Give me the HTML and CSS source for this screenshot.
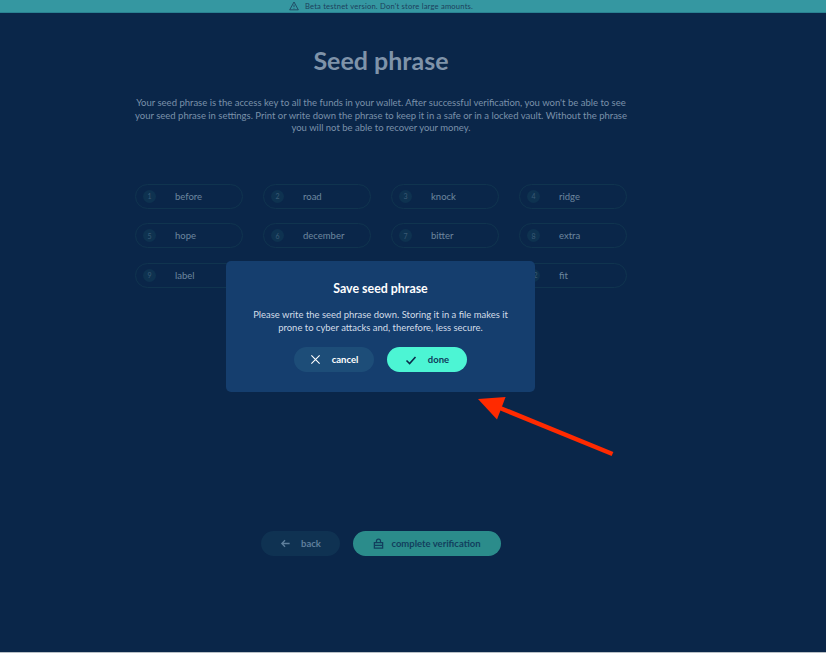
FILE: index.html
```html
<!DOCTYPE html>
<html lang="en">
<head>
  <meta charset="UTF-8">
  <meta name="viewport" content="width=device-width, initial-scale=1.0">
  <title>Seed phrase</title>
  <link rel="stylesheet" href="styles.css">
</head>
<body>
  <div class="beta-bar">
    <div class="beta-inner">
      <svg class="beta-icon" viewBox="0 0 12 12" width="10" height="10"><path d="M6 1.2 L11.2 10.6 H0.8 Z M6 4.4 V7.4 M6 8.5 V9.2" fill="none" stroke="#1d3f5c" stroke-width="1"/></svg>
      <span>Beta testnet version. Don't store large amounts.</span>
    </div>
  </div>

  <div class="page">
    <h1>Seed phrase</h1>
    <p class="intro">Your seed phrase is the access key to all the funds in your wallet. After successful verification, you won't be able to see your seed phrase in settings. Print or write down the phrase to keep it in a safe or in a locked vault. Without the phrase you will not be able to recover your money.</p>

    <div class="words">
      <div class="word"><span class="num">1</span><span>before</span></div>
      <div class="word"><span class="num">2</span><span>road</span></div>
      <div class="word"><span class="num">3</span><span>knock</span></div>
      <div class="word"><span class="num">4</span><span>ridge</span></div>
      <div class="word"><span class="num">5</span><span>hope</span></div>
      <div class="word"><span class="num">6</span><span>december</span></div>
      <div class="word"><span class="num">7</span><span>bitter</span></div>
      <div class="word"><span class="num">8</span><span>extra</span></div>
      <div class="word"><span class="num">9</span><span>label</span></div>
      <div class="word"><span class="num">10</span><span>wide</span></div>
      <div class="word"><span class="num">11</span><span>panel</span></div>
      <div class="word"><span class="num">12</span><span>fit</span></div>
    </div>

    <div class="actions">
      <button class="btn btn-back">
        <svg viewBox="0 0 12 12" width="11" height="11"><path d="M10.5 6 H2 M5.5 2.5 L2 6 L5.5 9.5" fill="none" stroke="#5f7f9c" stroke-width="1.4"/></svg>
        back
      </button>
      <button class="btn btn-complete">
        <svg viewBox="0 0 12 12" width="11" height="11"><path d="M3.8 5 V3.4 A2.2 2.2 0 0 1 8.2 3.4 V5 M1.5 5 H10.5 V11 H1.5 Z M1.5 8 H10.5" fill="none" stroke="#123f5e" stroke-width="1.4"/></svg>
        complete verification
      </button>
    </div>
  </div>

  <!-- Save dialog -->
  <div class="modal">
    <h2>Save seed phrase</h2>
    <p>Please write the seed phrase down. Storing it in a file makes it prone to cyber attacks and, therefore, less secure.</p>
    <div class="modal-actions">
      <button class="btn btn-cancel">
        <svg viewBox="0 0 12 12" width="11" height="11"><path d="M1.5 1.5 L10.5 10.5 M10.5 1.5 L1.5 10.5" fill="none" stroke="#ffffff" stroke-width="1.2"/></svg>
        cancel
      </button>
      <button class="btn btn-done">
        <svg viewBox="0 0 12 12" width="12" height="12"><path d="M1.5 6.5 L4.6 9.5 L10.5 3" fill="none" stroke="#0a2a49" stroke-width="1.6"/></svg>
        done
      </button>
    </div>
  </div>

  <!-- Annotation arrow -->
  <svg class="arrow" viewBox="0 0 140 62" width="140" height="62">
    <path d="M135.5 58 L23 12" fill="none" stroke="#ff2a00" stroke-width="4.5"/>
    <path d="M1 3 L28.6 1 L20 23.6 Z" fill="#ff2a00"/>
  </svg>
</body>
</html>
```

FILE: styles.css
```css
* {
  margin: 0;
  padding: 0;
  box-sizing: border-box;
}
body {
  width: 826px;
  height: 653px;
  overflow: hidden;
  position: relative;
  font-family: Lato, sans-serif;
  background-color: #0a2649;
  border-bottom: 1px solid #b9c0c6;
}
.beta-bar {
  height: 13px;
  background-color: #3597a1;
  border-bottom: 1px solid #2a8292;
}
.beta-inner {
  width: 762px;
  display: flex;
  justify-content: center;
  align-items: center;
  gap: 6px;
  height: 12px;
  font-size: 7.6px;
  letter-spacing: 0.2px;
  color: #1d3f5c;
}
.beta-icon {
  flex: none;
}
.page {
  width: 762px;
  display: flex;
  flex-direction: column;
  align-items: center;
}
h1 {
  margin-top: 32px;
  font-size: 25px;
  line-height: 30px;
  font-weight: 700;
  color: #7f93a9;
}
.intro {
  width: 495px;
  margin-top: 22px;
  font-size: 9.5px;
  line-height: 12.5px;
  text-align: center;
  color: #7a91a9;
}
.words {
  margin-top: 49px;
  display: grid;
  grid-template-columns: repeat(4, 108px);
  column-gap: 20px;
  row-gap: 14.5px;
}
.word {
  height: 25px;
  display: flex;
  align-items: center;
  padding-left: 7px;
  border: 1px solid #10344f;
  border-radius: 13px;
  font-size: 9.5px;
  color: #6d869f;
}
.num {
  width: 13px;
  height: 13px;
  margin-right: 19px;
  border-radius: 50%;
  background-color: #0e3250;
  display: flex;
  align-items: center;
  justify-content: center;
  font-size: 7px;
  color: #3a5a75;
}
.actions {
  margin-top: 243px;
  display: flex;
  gap: 13px;
}
.btn {
  height: 25px;
  border: none;
  border-radius: 13px;
  display: flex;
  align-items: center;
  justify-content: center;
  gap: 10px;
  font-family: Lato, sans-serif;
  font-size: 9.5px;
  font-weight: 700;
}
.btn-back {
  width: 79px;
  background-color: #0f3252;
  color: #5f7f9c;
}
.btn-complete {
  width: 148px;
  gap: 7px;
  background-color: #2b8c8b;
  color: #123f5e;
}
.modal {
  position: absolute;
  left: 226px;
  top: 261px;
  width: 309px;
  height: 131px;
  padding-top: 21px;
  border-radius: 5px;
  background-color: #153e6e;
  display: flex;
  flex-direction: column;
  align-items: center;
  text-align: center;
}
.modal h2 {
  font-size: 12.4px;
  line-height: 14px;
  font-weight: 700;
  color: #ffffff;
}
.modal p {
  width: 270px;
  margin-top: 13px;
  font-size: 9.45px;
  line-height: 12.5px;
  color: #d3dde8;
}
.modal-actions {
  margin-top: 13px;
  display: flex;
  gap: 13px;
}
.btn-cancel {
  width: 80px;
  gap: 11px;
  background-color: #1d4d78;
  color: #ffffff;
}
.btn-done {
  width: 80px;
  gap: 11px;
  background-color: #4cf5d4;
  color: #0f3a5c;
}
.arrow {
  position: absolute;
  left: 477px;
  top: 396px;
}
```
